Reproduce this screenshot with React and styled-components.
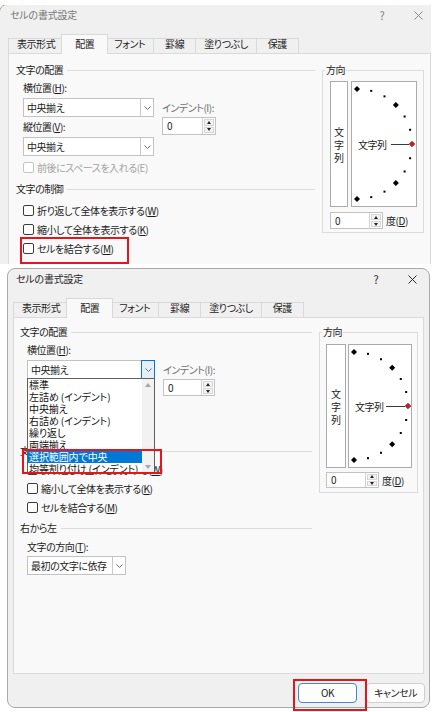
import React from "react";
import styled, { createGlobalStyle, css } from "styled-components";

const FONT = `"Noto Sans CJK JP", "Noto Sans", sans-serif`;

const GlobalStyle = createGlobalStyle`
  * { box-sizing: border-box; }
  html, body { margin: 0; padding: 0; background: #ffffff; }
  body {
    font-family: ${FONT};
    font-size: 10px;
    letter-spacing: -0.45px;
    color: #1c1c1c;
    font-feature-settings: "palt" 1;
  }
`;

const markCss = css`
  &::after {
    content: "";
    position: absolute;
    left: ${(p) => p.$mark.x}px;
    top: ${(p) => p.$mark.y}px;
    width: ${(p) => p.$mark.w}px;
    height: ${(p) => p.$mark.h}px;
    border: 2px solid #e8141c;
    pointer-events: none;
    z-index: 20;
  }
`;

const Page = styled.div`
  width: 438px;
  height: 712px;
  overflow: hidden;
  display: flex;
  flex-direction: column;
`;

const Crop = styled.div`
  flex: none;
  margin-top: 5px;
  width: 431px;
  height: 259px;
  overflow: hidden;
`;

const Window = styled.div`
  flex: none;
  display: flex;
  flex-direction: column;
  width: ${(p) => p.$w}px;
  height: 440px;
  margin: ${(p) => p.$m};
  background: #f0f0f0;
  border: 1px solid #a9a9a9;
  border-radius: 8px;
`;

const TitleBar = styled.div`
  flex: none;
  display: flex;
  align-items: flex-start;
  height: 29px;
  padding: 3px ${(p) => p.$pr}px 0 ${(p) => p.$pl}px;
`;

const TitleText = styled.div`
  flex: 1;
  line-height: 14px;
  letter-spacing: -0.2px;
  color: ${(p) => (p.$active ? "#262626" : "#777777")};
`;

const TitleButton = styled.div`
  flex: none;
  width: ${(p) => p.$w}px;
  height: 14px;
  display: flex;
  align-items: center;
  justify-content: center;
  font-size: 11px;
  color: ${(p) => (p.$active ? "#262626" : "#808080")};
`;

const TabStrip = styled.div`
  flex: none;
  display: flex;
  align-items: flex-end;
  height: 19px;
  padding-left: ${(p) => p.$pl}px;
`;

const Tab = styled.div`
  flex: none;
  min-width: 43px;
  height: 15px;
  margin-right: -1px;
  padding: 0 8px;
  display: flex;
  justify-content: center;
  align-items: flex-start;
  line-height: 10px;
  white-space: nowrap;
  background: #f0f0f0;
  border: 1px solid #d9d9d9;
  border-bottom: none;
  ${(p) =>
    p.$selected &&
    css`
      position: relative;
      z-index: 1;
      min-width: 47px;
      height: 20px;
      margin: 0 -3px -1px -2px;
      padding: 4px 10px 0;
      background: #f9f9f9;
    `}
`;

const Panel = styled.div`
  flex: 1;
  min-height: 0;
  margin: 0 ${(p) => p.$mr}px 0 ${(p) => p.$ml}px;
  padding: ${(p) => p.$pt}px ${(p) => p.$pr}px 0 ${(p) => p.$pl}px;
  display: grid;
  grid-template-columns: minmax(0, 1fr) ${(p) => p.$fw}px;
  column-gap: 7px;
  align-items: start;
  background: #f9f9f9;
  border: 1px solid #dadada;
`;

const Column = styled.div`
  display: flex;
  flex-direction: column;
  min-width: 0;
`;

const GroupHeader = styled.div`
  display: flex;
  align-items: center;
  gap: 4px;
  height: 14px;
  line-height: 14px;
  margin-top: ${(p) => p.$mt || 0}px;
  white-space: nowrap;
  &::after {
    content: "";
    flex: 1;
    border-top: 1px solid #dcdcdc;
  }
`;

const GroupBody = styled.div`
  display: flex;
  flex-direction: column;
  padding-left: 7px;
`;

const AlignGrid = styled.div`
  display: grid;
  grid-template-columns: ${(p) => p.$comboW}px auto;
  column-gap: 8px;
  align-items: start;
`;

const FieldLabel = styled.div`
  height: 14px;
  line-height: 14px;
  margin-top: ${(p) => p.$mt || 0}px;
  white-space: nowrap;
  color: ${(p) => (p.$muted ? "#6e6e6e" : "inherit")};
`;

const Key = styled.span`
  text-decoration: underline;
  text-underline-offset: 1px;
`;

const ComboWrap = styled.div`
  position: relative;
  margin-top: ${(p) => p.$mt || 0}px;
`;

const ComboBox = styled.div`
  display: flex;
  width: ${(p) => p.$w}px;
  height: 19px;
  background: #ffffff;
  border: 1px solid #c2c2c2;
`;

const ComboValue = styled.div`
  flex: 1;
  min-width: 0;
  padding-left: 3px;
  line-height: 17px;
  white-space: nowrap;
  overflow: hidden;
`;

const ComboArrow = styled.div`
  flex: none;
  width: 13px;
  display: flex;
  align-items: center;
  justify-content: center;
  border-left: 1px solid #c9c9c9;
  ${(p) =>
    p.$open &&
    css`
      width: 14px;
      margin: -1px -1px -1px 0;
      border: 1px solid #0a74d0;
      background: #e3effb;
    `}
`;

const DropList = styled.div`
  position: absolute;
  left: 0;
  top: 18px;
  z-index: 5;
  width: 100%;
  height: 95px;
  display: flex;
  background: #ffffff;
  border: 1px solid #5f5f5f;
  ${(p) => p.$mark && markCss}
`;

const ListItems = styled.div`
  flex: 1;
  min-width: 0;
  overflow: hidden;
`;

const ListItem = styled.div`
  height: 12px;
  line-height: 12px;
  padding-left: 1px;
  white-space: nowrap;
  letter-spacing: -0.1px;
  color: #111111;
  ${(p) =>
    p.$active &&
    css`
      background: #0078d7;
      color: #ffffff;
    `}
`;

const ScrollTrack = styled.div`
  flex: none;
  width: 12px;
  display: flex;
  flex-direction: column;
  align-items: center;
  justify-content: space-between;
  padding: 4px 0 3px;
  background: #f2f2f2;
`;

const Arrow = styled.span`
  width: 0;
  height: 0;
  border-left: ${(p) => p.$s}px solid transparent;
  border-right: ${(p) => p.$s}px solid transparent;
  ${(p) =>
    p.$down
      ? css`border-top: ${p.$s + 0.5}px solid ${p.$c};`
      : css`border-bottom: ${p.$s + 0.5}px solid ${p.$c};`}
`;

const SpinBox = styled.div`
  display: flex;
  width: ${(p) => p.$w}px;
  height: ${(p) => p.$h}px;
  margin-top: ${(p) => p.$mt || 0}px;
  background: #ffffff;
  border: 1px solid #c2c2c2;
`;

const SpinValue = styled.div`
  flex: 1;
  padding-left: 4px;
  line-height: ${(p) => p.$h - 2}px;
`;

const SpinButtons = styled.div`
  flex: none;
  width: 13px;
  display: flex;
  flex-direction: column;
  gap: 1px;
  padding: 1px;
  border-left: 1px solid #d3d3d3;
  background: #ffffff;
`;

const SpinHalf = styled.div`
  flex: 1;
  display: flex;
  align-items: center;
  justify-content: center;
  background: #f3f3f3;
  border: 1px solid #d6d6d6;
`;

const CheckRow = styled.div`
  position: relative;
  display: flex;
  align-items: center;
  gap: 3px;
  height: 14px;
  margin-top: ${(p) => p.$mt || 0}px;
  white-space: nowrap;
  color: ${(p) => (p.$disabled ? "#a3a3a3" : "inherit")};
  ${(p) => p.$mark && markCss}
`;

const CheckBox = styled.span`
  flex: none;
  width: 11px;
  height: 11px;
  background: #ffffff;
  border: 1px solid ${(p) => (p.$disabled ? "#c4c4c4" : "#3b3b3b")};
  border-radius: 2px;
`;

const DirectionSet = styled.fieldset`
  margin: 0;
  min-width: 0;
  padding: ${(p) => p.$pad};
  border: 1px solid #dcdcdc;
`;

const DirectionLegend = styled.legend`
  height: 14px;
  line-height: 14px;
  padding: 0 1px;
  margin-left: ${(p) => p.$ml}px;
`;

const DirectionRow = styled.div`
  display: flex;
  gap: ${(p) => p.$gap}px;
`;

const VerticalLabel = styled.div`
  flex: none;
  width: ${(p) => p.$w}px;
  height: ${(p) => p.$h}px;
  display: flex;
  flex-direction: column;
  align-items: center;
  justify-content: center;
  line-height: 13px;
  letter-spacing: 0;
  background: #ffffff;
  border: 1px solid #ababab;
`;

const DialFace = styled.div`
  flex: none;
  width: ${(p) => p.$w}px;
  height: ${(p) => p.$h}px;
  background: #ffffff;
  border: 1px solid #ababab;
  svg {
    display: block;
  }
`;

const DegreeRow = styled.div`
  display: flex;
  align-items: center;
  gap: 3px;
  margin-top: ${(p) => p.$mt}px;
  white-space: nowrap;
`;

const Footer = styled.div`
  flex: none;
  height: 33px;
  display: flex;
  justify-content: flex-end;
  align-items: flex-start;
  gap: 9px;
  padding: 9px 4px 0 0;
`;

const Button = styled.button`
  position: relative;
  width: 59px;
  height: 20px;
  padding: 0;
  overflow: visible;
  font: inherit;
  letter-spacing: inherit;
  color: #1c1c1c;
  line-height: 18px;
  background: #fdfdfd;
  border: 1px solid ${(p) => (p.$primary ? "#3d87d4" : "#cfcfcf")};
  border-radius: 4px;
  ${(p) => p.$mark && markCss}
`;

function CloseIcon({ color }) {
  return (
    <svg width="9" height="9" viewBox="0 0 9 9">
      <path d="M0.5 0.5 L8.5 8.5 M8.5 0.5 L0.5 8.5" stroke={color} strokeWidth="1" fill="none" />
    </svg>
  );
}

function Chevron() {
  return (
    <svg width="7" height="4" viewBox="0 0 7 4">
      <path d="M0.5 0.5 L3.5 3.5 L6.5 0.5" stroke="#6b6b6b" strokeWidth="1" fill="none" />
    </svg>
  );
}

function Combo({ w, value, open }) {
  return (
    <ComboBox $w={w}>
      <ComboValue>{value}</ComboValue>
      <ComboArrow $open={open}>
        <Chevron />
      </ComboArrow>
    </ComboBox>
  );
}

function Spin({ w, h, mt, value }) {
  return (
    <SpinBox $w={w} $h={h} $mt={mt}>
      <SpinValue $h={h}>{value}</SpinValue>
      <SpinButtons>
        <SpinHalf>
          <Arrow $s={2.5} $c="#222" />
        </SpinHalf>
        <SpinHalf>
          <Arrow $s={2.5} $down $c="#222" />
        </SpinHalf>
      </SpinButtons>
    </SpinBox>
  );
}

function Check({ mt, disabled, mark, children }) {
  return (
    <CheckRow $mt={mt} $disabled={disabled} $mark={mark}>
      <CheckBox $disabled={disabled} />
      <span>{children}</span>
    </CheckRow>
  );
}

function diamond(x, y, r) {
  return `${x},${y - r} ${x + r},${y} ${x},${y + r} ${x - r},${y}`;
}

function Dial({ w, h, lineStart }) {
  const iw = w - 2;
  const ih = h - 2;
  const cx = 5;
  const cy = ih / 2;
  const r = ih / 2 - 7;
  const marks = [];
  for (let a = 90; a >= -90; a -= 15) {
    const rad = (a * Math.PI) / 180;
    const x = cx + r * Math.cos(rad);
    const y = cy - r * Math.sin(rad);
    if (a === 0) {
      marks.push(<polygon key={a} points={diamond(x, y, 2.8)} fill="#e3131b" stroke="#4a0a0a" strokeWidth="0.6" />);
    } else if (Math.abs(a) % 45 === 0) {
      marks.push(<polygon key={a} points={diamond(x, y, 3)} fill="#000" />);
    } else {
      marks.push(<rect key={a} x={x - 1} y={y - 1} width="2" height="2" fill="#000" />);
    }
  }
  const ly = Math.floor(cy) + 0.5;
  return (
    <DialFace $w={w} $h={h}>
      <svg width={iw} height={ih} viewBox={`0 0 ${iw} ${ih}`}>
        <line x1={cx + lineStart} y1={ly} x2={cx + r - 3} y2={ly} stroke="#3a3a3a" strokeWidth="1" />
        {marks}
        <text x={cx + 1} y={cy} dominantBaseline="central" fontSize="10" fill="#1c1c1c" fontFamily={FONT}>
          文字列
        </text>
      </svg>
    </DialFace>
  );
}

const TABS = ["表示形式", "配置", "フォント", "罫線", "塗りつぶし", "保護"];
const H_ITEMS = [
  "標準",
  "左詰め (インデント)",
  "中央揃え",
  "右詰め (インデント)",
  "繰り返し",
  "両端揃え",
  "選択範囲内で中央",
  "均等割り付け (インデント)",
];

function FormatDialog({ cfg }) {
  const iconColor = cfg.active ? "#2a2a2a" : "#8a8a8a";
  return (
    <Window $w={cfg.w} $m={cfg.m}>
      <TitleBar $pl={cfg.titlePl} $pr={cfg.titlePr}>
        <TitleText $active={cfg.active}>セルの書式設定</TitleText>
        <TitleButton $w={46} $active={cfg.active}>?</TitleButton>
        <TitleButton $w={26} $active={cfg.active}>
          <CloseIcon color={iconColor} />
        </TitleButton>
      </TitleBar>
      <TabStrip $pl={cfg.tabsPl}>
        {TABS.map((t) => (
          <Tab key={t} $selected={t === "配置"}>
            {t}
          </Tab>
        ))}
      </TabStrip>
      <Panel {...cfg.panel}>
        <Column>
          <GroupHeader>文字の配置</GroupHeader>
          <GroupBody>
            <AlignGrid $comboW={cfg.comboW}>
              <Column>
                <FieldLabel $mt={4}>
                  横位置(<Key>H</Key>):
                </FieldLabel>
                <ComboWrap $mt={3}>
                  <Combo w={cfg.comboW} value="中央揃え" open={cfg.listOpen} />
                  {cfg.listOpen && (
                    <DropList $mark={cfg.listMark}>
                      <ListItems>
                        {H_ITEMS.map((item) => (
                          <ListItem key={item} $active={item === "選択範囲内で中央"}>
                            {item}
                          </ListItem>
                        ))}
                      </ListItems>
                      <ScrollTrack>
                        <Arrow $s={3.5} $c="#a6a6a6" />
                        <Arrow $s={3.5} $down $c="#a6a6a6" />
                      </ScrollTrack>
                    </DropList>
                  )}
                </ComboWrap>
                <FieldLabel $mt={3}>
                  縦位置(<Key>V</Key>):
                </FieldLabel>
                <ComboWrap $mt={3}>
                  <Combo w={cfg.comboW} value="中央揃え" />
                </ComboWrap>
                <Check mt={4} disabled>
                  前後にスペースを入れる(E)
                </Check>
              </Column>
              <Column>
                <FieldLabel $mt={24} $muted>
                  インデント(I):
                </FieldLabel>
                <Spin w={cfg.indentSpin.w} h={cfg.indentSpin.h} mt={2} value="0" />
              </Column>
            </AlignGrid>
          </GroupBody>
          <GroupHeader $mt={8}>文字の制御</GroupHeader>
          <GroupBody>
            <Check mt={cfg.checkFirst}>
              折り返して全体を表示する(<Key>W</Key>)
            </Check>
            <Check mt={5}>
              縮小して全体を表示する(<Key>K</Key>)
            </Check>
            <Check mt={5} mark={cfg.mergeMark}>
              セルを結合する(<Key>M</Key>)
            </Check>
          </GroupBody>
          <GroupHeader $mt={7}>右から左</GroupHeader>
          <GroupBody>
            <FieldLabel $mt={5}>
              文字の方向(<Key>T</Key>):
            </FieldLabel>
            <ComboWrap $mt={2}>
              <Combo w={99} value="最初の文字に依存" />
            </ComboWrap>
          </GroupBody>
        </Column>
        <DirectionSet $pad={cfg.dir.pad}>
          <DirectionLegend $ml={cfg.dir.legendMl}>方向</DirectionLegend>
          <DirectionRow $gap={cfg.dir.gap}>
            <VerticalLabel $w={cfg.dir.vw} $h={cfg.dir.h}>
              {"文字列".split("").map((c) => (
                <span key={c}>{c}</span>
              ))}
            </VerticalLabel>
            <Dial w={cfg.dir.dw} h={cfg.dir.h} lineStart={cfg.dir.lineStart} />
          </DirectionRow>
          <DegreeRow $mt={cfg.dir.degMt}>
            <Spin w={53} h={cfg.dir.degH} value="0" />
            <span>
              度(<Key>D</Key>)
            </span>
          </DegreeRow>
        </DirectionSet>
      </Panel>
      <Footer>
        <Button $primary $mark={cfg.okMark}>
          OK
        </Button>
        <Button>キャンセル</Button>
      </Footer>
    </Window>
  );
}

const TOP = {
  w: 439,
  m: "-1px 0 0 -1px",
  active: false,
  titlePl: 10,
  titlePr: 6,
  tabsPl: 8,
  panel: { $ml: 8, $mr: 6, $pt: 9, $pr: 6, $pl: 7, $fw: 102 },
  comboW: 131,
  indentSpin: { w: 54, h: 18 },
  checkFirst: 7,
  listOpen: false,
  mergeMark: { x: -3, y: -4, w: 105, h: 23 },
  dir: { pad: "4px 6px 3px 7px", legendMl: -5, gap: 3, vw: 18, dw: 66, h: 126, lineStart: 34, degMt: 5, degH: 17 },
};

const BOTTOM = {
  w: 423,
  m: "4px 0 0 7px",
  active: true,
  titlePl: 8,
  titlePr: 4,
  tabsPl: 5,
  panel: { $ml: 5, $mr: 5, $pt: 7, $pr: 5, $pl: 6, $fw: 99 },
  comboW: 128,
  indentSpin: { w: 52, h: 17 },
  checkFirst: 4,
  listOpen: true,
  listMark: { x: -6, y: 70, w: 136, h: 21 },
  okMark: { x: -6, y: -5, w: 70, h: 28 },
  dir: { pad: "5px 5px 4px 6px", legendMl: -4, gap: 2, vw: 20, dw: 64, h: 124, lineStart: 32, degMt: 4, degH: 16 },
};

export default function App() {
  return (
    <>
      <GlobalStyle />
      <Page>
        <Crop>
          <FormatDialog cfg={TOP} />
        </Crop>
        <FormatDialog cfg={BOTTOM} />
      </Page>
    </>
  );
}
